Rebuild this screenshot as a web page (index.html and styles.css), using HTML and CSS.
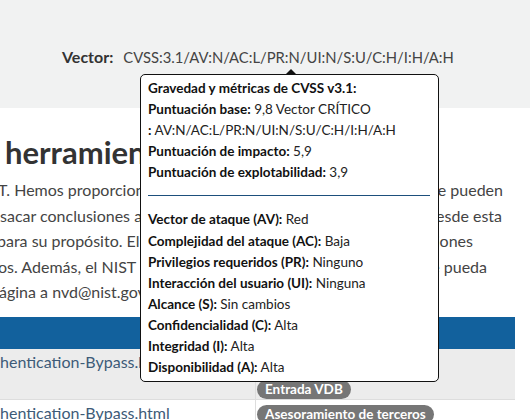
FILE: index.html
```html
<!DOCTYPE html>
<html lang="es">
<head>
<meta charset="utf-8">
<title>CVSS</title>
<link rel="stylesheet" href="styles.css">
</head>
<body>
<div class="band">
  <div class="vector">
    <span class="vlabel">Vector:</span>
    <span class="vvalue">CVSS:3.1/AV:N/AC:L/PR:N/UI:N/S:U/C:H/I:H/A:H</span>
  </div>
</div>

<div class="content">
  <h2 class="heading">herramientas</h2>
  <div class="para">
    <div class="line w1"><span class="l">T. Hemos proporcionado estos enlaces a otros sitios web porque</span><span class="r">contienen información que pueden</span></div>
    <div class="line w2"><span class="l">sacar conclusiones a causa de que se haga referencia o no a otros sitios</span><span class="r">desde esta</span></div>
    <div class="line w3"><span class="l">para su propósito. El NIST no necesariamente respalda las</span><span class="r">opiniones</span></div>
    <div class="line w4"><span class="l">os. Además, el NIST no respalda ningún producto comercial</span><span class="r">que pueda</span></div>
    <div class="line w5"><span class="l">ágina a nvd@nist.gov.</span></div>
  </div>

  <div class="table">
    <div class="thead"></div>
    <div class="row grey">
      <div class="c1"><a class="link">hentication-Bypass.html</a></div>
      <div class="c2 c2a"><span class="badge">Entrada VDB</span></div>
    </div>
    <div class="row">
      <div class="c1"><a class="link">hentication-Bypass.html</a></div>
      <div class="c2 c2b"><span class="badge">Asesoramiento de terceros</span></div>
    </div>
  </div>
</div>

<div class="tooltip">
  <div class="tline"><b>Gravedad y métricas de CVSS v3.1:</b></div>
  <div class="tline"><b>Puntuación base:</b> 9,8 Vector CRÍTICO</div>
  <div class="tline"><b>:</b> AV:N/AC:L/PR:N/UI:N/S:U/C:H/I:H/A:H</div>
  <div class="tline"><b>Puntuación de impacto:</b> 5,9</div>
  <div class="tline"><b>Puntuación de explotabilidad:</b> 3,9</div>
  <hr class="tsep">
  <div class="tline"><b>Vector de ataque (AV):</b> Red</div>
  <div class="tline"><b>Complejidad del ataque (AC):</b> Baja</div>
  <div class="tline"><b>Privilegios requeridos (PR):</b> Ninguno</div>
  <div class="tline"><b>Interacción del usuario (UI):</b> Ninguna</div>
  <div class="tline"><b>Alcance (S):</b> Sin cambios</div>
  <div class="tline"><b>Confidencialidad (C):</b> Alta</div>
  <div class="tline"><b>Integridad (I):</b> Alta</div>
  <div class="tline"><b>Disponibilidad (A):</b> Alta</div>
</div>
</body>
</html>
```
FILE: styles.css
```css
html, body {
  margin: 0;
  padding: 0;
  background: #ffffff;
  font-family: "Lato", "Open Sans", sans-serif;
  color: #333333;
  overflow: hidden;
}

.band {
  background: #f1f2f2;
  height: 108px;
  box-sizing: border-box;
  padding-top: 46px;
}

.vector {
  display: flex;
  align-items: baseline;
  gap: 10px;
  padding-left: 62px;
  font-size: 16px;
  line-height: 22px;
}

.vlabel {
  font-weight: 700;
  color: #333333;
}

.vvalue {
  color: #444444;
  font-size: 14.8px;
}

.content {
  padding-top: 26px;
}

.heading {
  margin: 0 0 0 5px;
  font-size: 31px;
  line-height: 36px;
  font-weight: 700;
  color: #333333;
  white-space: nowrap;
}

.para {
  margin-top: 7px;
  font-size: 16px;
  line-height: 25.5px;
  color: #444444;
}

.line {
  display: flex;
  justify-content: space-between;
  white-space: nowrap;
  overflow: hidden;
}

.line .l {
  flex: 1;
  overflow: hidden;
}

.w1 { width: 505px; margin-left: -2px; }
.w2 { width: 502px; margin-left: 0; }
.w3 { width: 476px; margin-left: -3px; }
.w4 { width: 489px; margin-left: -2px; }
.w5 { width: 505px; margin-left: -1px; }

.table {
  margin-top: 12px;
  width: 515px;
}

.thead {
  height: 32px;
  background: #12619d;
}

.row {
  display: grid;
  grid-template-columns: 256px 1fr;
  border-bottom: 1px solid #dddddd;
  height: 51px;
  box-sizing: border-box;
}

.row.grey {
  background: #ececec;
}

.c1 {
  border-right: 1px solid #dddddd;
  padding: 2px 0 0 0;
  font-size: 16px;
  line-height: 22px;
  white-space: nowrap;
  overflow: hidden;
}

.link {
  color: #3d5b78;
}

.c2 {
  display: flex;
  flex-direction: column;
  align-items: flex-start;
  padding-left: 1px;
}

.c2a {
  padding-top: 31px;
}

.c2b {
  padding-top: 5px;
}

.badge {
  display: inline-block;
  background: #767676;
  color: #ffffff;
  font-weight: 700;
  font-size: 13.5px;
  line-height: 19px;
  padding: 0 8px;
  border-radius: 10px;
  white-space: nowrap;
}

.tooltip {
  position: absolute;
  left: 140px;
  top: 74px;
  width: 299px;
  box-sizing: border-box;
  background: #ffffff;
  border: 1px solid #111111;
  border-radius: 5px;
  padding: 3px 8px 3px 7px;
  font-size: 13.5px;
  line-height: 21.1px;
  color: #222222;
}

.tooltip::before {
  content: "";
  position: absolute;
  left: 144px;
  top: -6px;
  border-left: 6px solid transparent;
  border-right: 6px solid transparent;
  border-bottom: 6px solid #111111;
}

.tooltip b {
  font-weight: 700;
  color: #111111;
}

.tline {
  white-space: nowrap;
}

.tsep {
  border: 0;
  border-top: 1px solid #1d4f7c;
  margin: 12px 0 13px 0;
}
```
